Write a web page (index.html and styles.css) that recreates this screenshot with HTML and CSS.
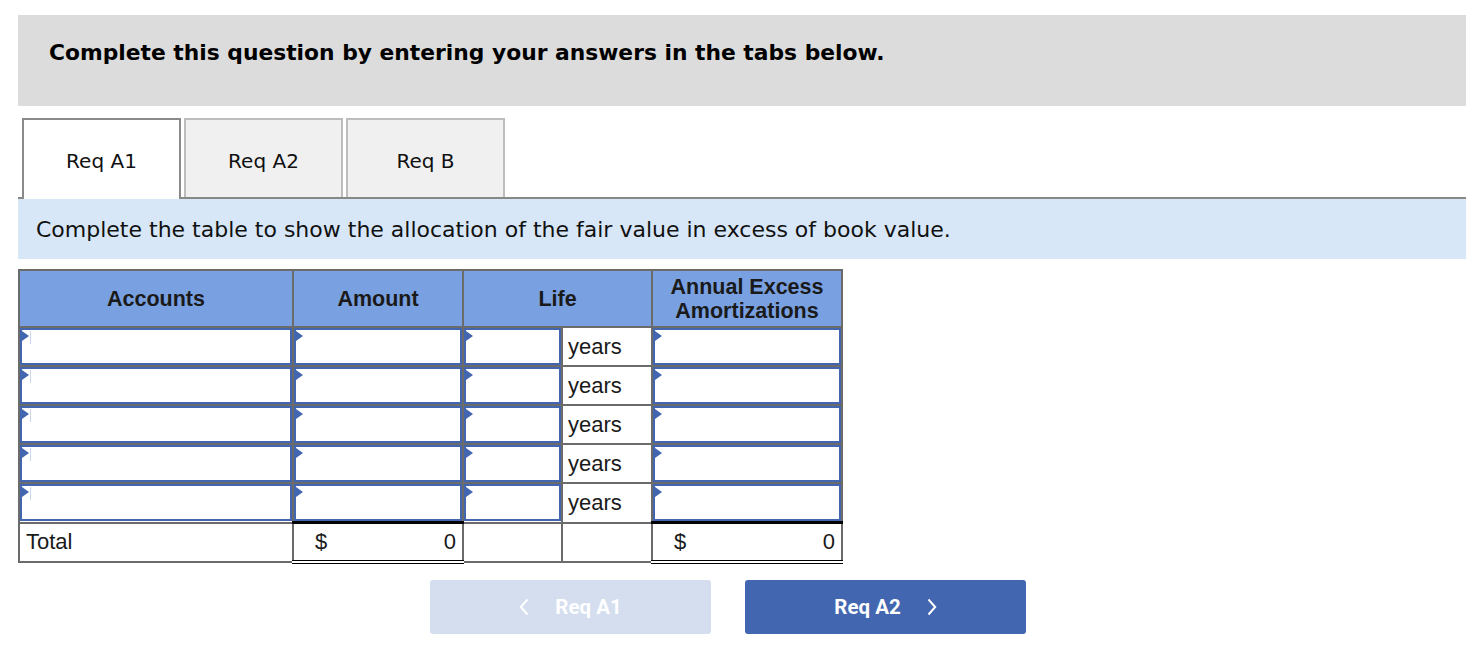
FILE: index.html
```html
<!DOCTYPE html>
<html>
<head>
<meta charset="utf-8">
<link rel="stylesheet" href="styles.css">
</head>
<body>
<div class="page">
  <div class="banner">Complete this question by entering your answers in the tabs below.</div>
  <div class="tabs">
    <div class="tab active">Req A1</div>
    <div class="tab">Req A2</div>
    <div class="tab">Req B</div>
  </div>
  <div class="instr">Complete the table to show the allocation of the fair value in excess of book value.</div>
  <table class="grid">
    <colgroup>
      <col class="c1"><col class="c2"><col class="c3"><col class="c4"><col class="c5">
    </colgroup>
    <thead>
      <tr><th>Accounts</th><th>Amount</th><th colspan="2">Life</th><th>Annual Excess<br>Amortizations</th></tr>
    </thead>
    <tbody>
      <tr><td class="in"><div class="box cur"></div></td><td class="in"><div class="box"></div></td><td class="in"><div class="box"></div></td><td class="yrs">years</td><td class="in"><div class="box"></div></td></tr>
      <tr><td class="in"><div class="box cur"></div></td><td class="in"><div class="box"></div></td><td class="in"><div class="box"></div></td><td class="yrs">years</td><td class="in"><div class="box"></div></td></tr>
      <tr><td class="in"><div class="box cur"></div></td><td class="in"><div class="box"></div></td><td class="in"><div class="box"></div></td><td class="yrs">years</td><td class="in"><div class="box"></div></td></tr>
      <tr><td class="in"><div class="box cur"></div></td><td class="in"><div class="box"></div></td><td class="in"><div class="box"></div></td><td class="yrs">years</td><td class="in"><div class="box"></div></td></tr>
      <tr><td class="in"><div class="box cur"></div></td><td class="in"><div class="box"></div></td><td class="in"><div class="box"></div></td><td class="yrs">years</td><td class="in"><div class="box"></div></td></tr>
      <tr class="total">
        <td class="lbl">Total</td>
        <td class="sum"><div class="money"><span>$</span><span>0</span></div></td>
        <td></td><td></td>
        <td class="sum"><div class="money"><span>$</span><span>0</span></div></td>
      </tr>
    </tbody>
  </table>
  <div class="nav">
    <button class="btn prev"><svg width="10" height="18" viewBox="0 0 10 18"><path d="M8.5 1.5 L1.8 9 L8.5 16.5" fill="none" stroke="#fff" stroke-width="2"/></svg><span>Req A1</span></button>
    <button class="btn next"><span>Req A2</span><svg width="10" height="18" viewBox="0 0 10 18"><path d="M1.5 1.5 L8.2 9 L1.5 16.5" fill="none" stroke="#fff" stroke-width="2"/></svg></button>
  </div>
</div>
</body>
</html>
```

FILE: styles.css
```css
* { box-sizing: border-box; }
html, body { margin: 0; padding: 0; background: #fff; }
.page { padding: 15px 8px 0 18px; }

.banner {
  background: #dcdcdc;
  height: 91px;
  padding: 25px 0 0 31px;
  font-family: "DejaVu Sans", Verdana, sans-serif;
  font-weight: bold;
  font-size: 21.8px;
  color: #000;
}

.tabs {
  display: flex;
  gap: 3px;
  margin-top: 12px;
  padding-left: 4px;
  border-bottom: 2px solid #888;
  height: 81px;
}
.tab {
  width: 159px;
  height: 79px;
  border: 2px solid #bdbdbd;
  border-bottom: none;
  background: #f0f0f0;
  display: flex;
  align-items: center;
  justify-content: center;
  padding-top: 4px;
  font-family: "DejaVu Sans", Verdana, sans-serif;
  font-size: 20px;
  color: #111;
}
.tab.active {
  background: #fff;
  border-color: #8a8a8a;
  height: 81px;
  margin-bottom: -2px;
  padding-top: 4px;
  padding-bottom: 2px;
}

.instr {
  background: #d7e7f7;
  height: 60px;
  padding: 18px 0 0 18px;
  font-family: "DejaVu Sans", Verdana, sans-serif;
  font-size: 22px;
  color: #111;
}

.grid {
  margin-top: 10px;
  border-collapse: collapse;
  table-layout: fixed;
  width: 825px;
  font-family: "Liberation Sans", Arial, sans-serif;
  font-size: 22px;
  color: #1a1a1a;
}
.c1 { width: 274px; }
.c2 { width: 170px; }
.c3 { width: 99px; }
.c4 { width: 90px; }
.c5 { width: 190px; }
.grid th, .grid td { border: 2px solid #6b6b6b; padding: 0; }
.grid th {
  background: #79a0e0;
  height: 57px;
  font-weight: bold;
  font-size: 21.5px;
  line-height: 24px;
  color: #1a1a1a;
}
.grid td { height: 39px; }
.box {
  position: relative;
  height: 37px;
  border: 2px solid #4266b0;
  background: #fff;
}
.box::before {
  content: "";
  position: absolute;
  left: 0;
  top: 1px;
  border-left: 7px solid #4266b0;
  border-top: 5px solid transparent;
  border-bottom: 5px solid transparent;
}
.box.cur::after {
  content: "";
  position: absolute;
  left: 8px;
  top: 1px;
  width: 1px;
  height: 13px;
  background: #c9d6ef;
}
.yrs { padding-left: 5px !important; vertical-align: middle; }
.total td { height: 39px; }
.lbl { padding-left: 6px !important; }
.total .sum { border-top: 3px solid #000; border-bottom: 4px double #000; }
.money { display: flex; justify-content: space-between; padding: 0 6px 0 21px; }

.nav {
  display: flex;
  gap: 34px;
  margin: 16px 0 0 412px;
}
.btn {
  width: 281px;
  height: 54px;
  border: none;
  border-radius: 3px;
  display: flex;
  align-items: center;
  justify-content: center;
  gap: 26px;
  font-family: Roboto, "Liberation Sans", sans-serif;
  font-weight: bold;
  font-size: 20.5px;
  color: #fff;
  padding: 0;
}
.prev { background: #d4deef; }
.next { background: #4267b0; }
```
